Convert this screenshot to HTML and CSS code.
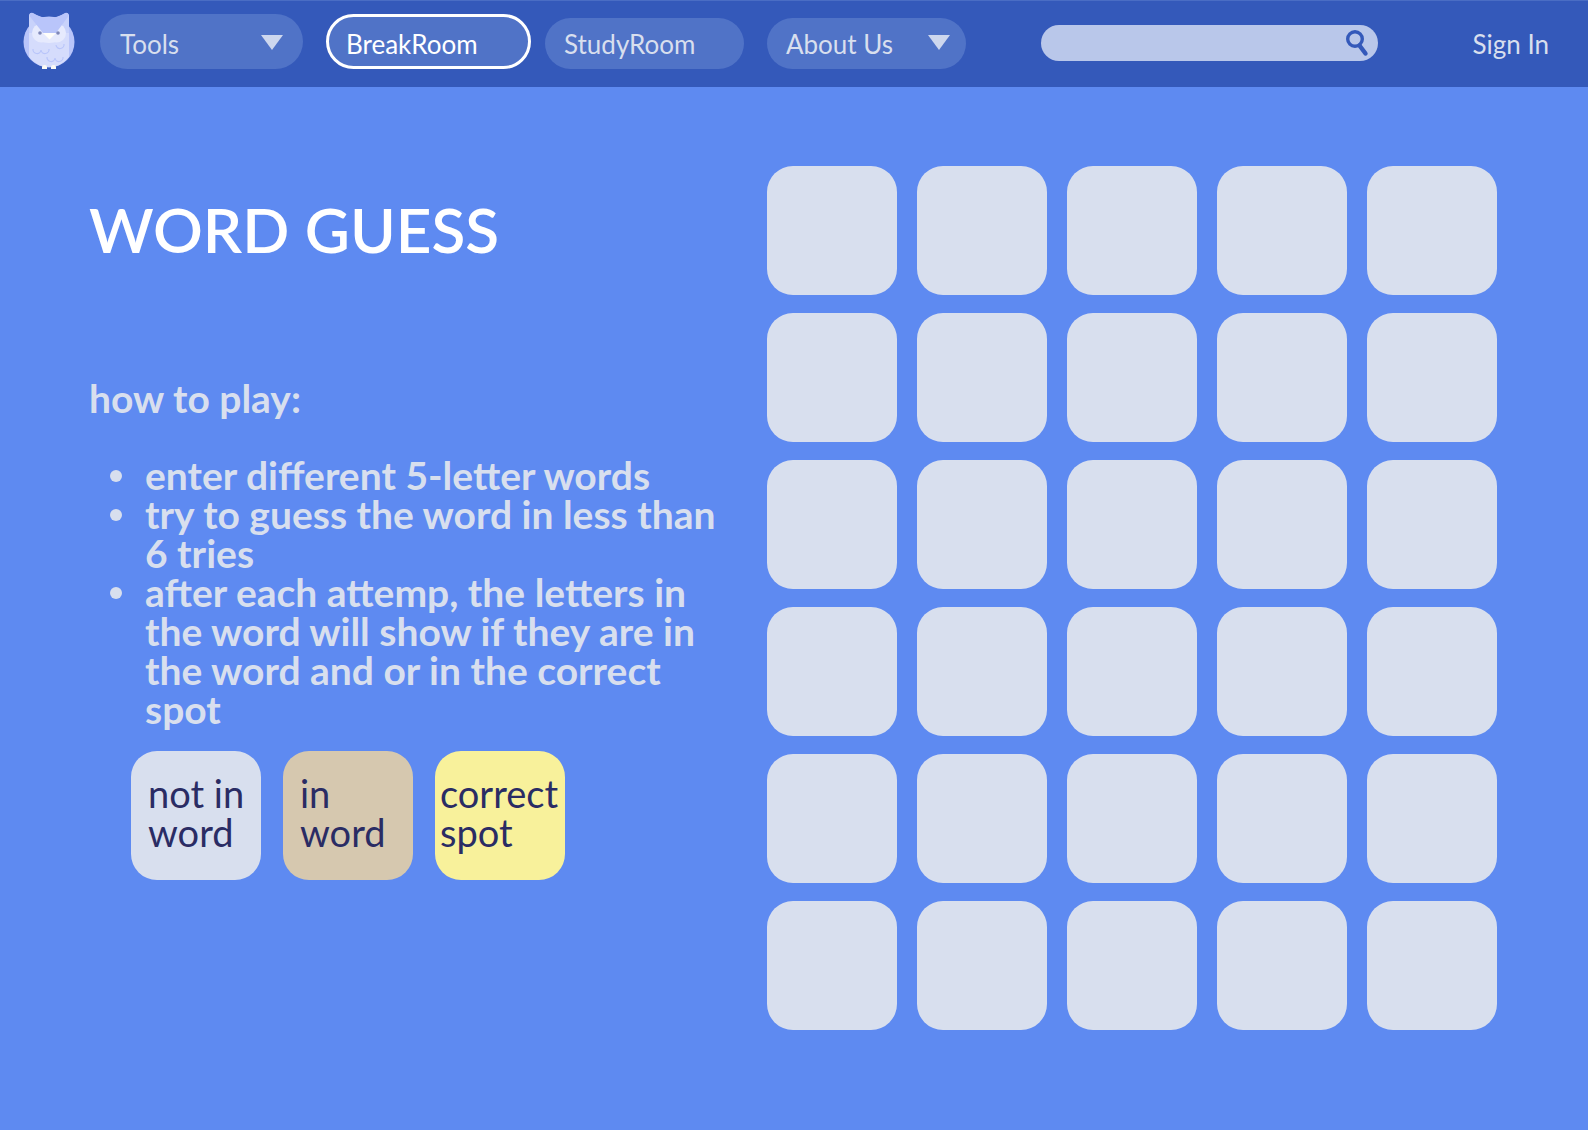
FILE: index.html
```html
<!DOCTYPE html>
<html lang="en">
<head>
  <meta charset="utf-8">
  <meta name="viewport" content="width=device-width, initial-scale=1">
  <title>Word Guess</title>
  <link rel="stylesheet" href="styles.css">
</head>
<body>
  <header class="topbar">
    <a class="logo" href="#" aria-label="Home">
      <svg width="52" height="58" viewBox="23 12 52 58" aria-hidden="true">
        <ellipse cx="49" cy="42" rx="25.5" ry="25.5" fill="#b9c5fa"/>
        <path d="M29 24h40v33q-8 10-20 10t-20-10z" fill="#d5dcfc"/>
        <path d="M29 15q1-3 4-1.500 8 4.500 16 4.500t16-4.500q3-1.500 4 1.500v18H29z" fill="#c8d2fb"/>
        <ellipse cx="41.500" cy="33" rx="9.500" ry="9.500" fill="#e6eafd"/>
        <ellipse cx="56.500" cy="33" rx="9.500" ry="9.500" fill="#e6eafd"/>
        <path d="M36 36h26q-3 7-13 7t-13-7z" fill="#e6eafd"/>
        <path d="M29.500 16q0-4 3.500-3 8 5 16 5t16-5q3.500-1 3.500 3L56 33H43z" fill="#b9c5fa"/>
        <path d="M43 33h13l-6.500 6.500z" fill="#fffefa"/>
        <circle cx="40" cy="33" r="1.800" fill="#7f88b8"/>
        <circle cx="58" cy="33" r="1.800" fill="#7f88b8"/>
        <path d="M33 49a4 4 0 0 0 8 1a4 4 0 0 0 8-1M56 45a4 4 0 0 0 8-1M47 57a4 4 0 0 0 8 1a4 4 0 0 0 8-1" fill="none" stroke="#b9c5fa" stroke-width="1.200"/>
        <path d="M42 69v-2q0-2 2.500-2t2.500 2v2zM51 69v-2q0-2 2.500-2t2.500 2v2z" fill="#fbfaf4"/>
      </svg>
    </a>
    <nav class="nav" aria-label="Main">
      <button class="pill pill-tall" type="button">Tools
        <svg class="caret" width="22" height="15" viewBox="0 0 22 15" aria-hidden="true"><path d="M0 0h22L11 15z"/></svg>
      </button>
      <a class="pill pill-tall pill-active" href="#" aria-current="page">BreakRoom</a>
      <a class="pill" href="#">StudyRoom</a>
      <button class="pill" type="button">About Us
        <svg class="caret" width="22" height="15" viewBox="0 0 22 15" aria-hidden="true"><path d="M0 0h22L11 15z"/></svg>
      </button>
    </nav>
    <form class="search" role="search">
      <input class="search-input" type="search" aria-label="Search">
      <button class="search-button" type="submit" aria-label="Search">
        <svg width="24" height="28" viewBox="0 0 24 28" aria-hidden="true">
          <circle cx="10" cy="10" r="7.300" fill="none" stroke="#3459ba" stroke-width="3.400"/>
          <path d="M14.500 16.500l6 8" stroke="#3459ba" stroke-width="4.400" stroke-linecap="round"/>
        </svg>
      </button>
    </form>
    <a class="signin" href="#">Sign In</a>
  </header>

  <main class="game">
    <section class="intro">
      <h1 class="title">WORD GUESS</h1>
      <h2 class="subtitle">how to play:</h2>
      <ul class="rules">
        <li class="rule"><span>enter different 5-letter words</span></li>
        <li class="rule"><span>try to guess the word in less than 6 tries</span></li>
        <li class="rule"><span>after each attemp, the letters in the word will show if they are in the word and or in the correct spot</span></li>
      </ul>
      <div class="legend">
        <div class="key key-absent">not in word</div>
        <div class="key key-present">in<br>word</div>
        <div class="key key-correct">correct spot</div>
      </div>
    </section>
    <section class="board" aria-label="Guesses">
      <div class="tile"></div><div class="tile"></div><div class="tile"></div><div class="tile"></div><div class="tile"></div>
      <div class="tile"></div><div class="tile"></div><div class="tile"></div><div class="tile"></div><div class="tile"></div>
      <div class="tile"></div><div class="tile"></div><div class="tile"></div><div class="tile"></div><div class="tile"></div>
      <div class="tile"></div><div class="tile"></div><div class="tile"></div><div class="tile"></div><div class="tile"></div>
      <div class="tile"></div><div class="tile"></div><div class="tile"></div><div class="tile"></div><div class="tile"></div>
      <div class="tile"></div><div class="tile"></div><div class="tile"></div><div class="tile"></div><div class="tile"></div>
    </section>
  </main>
</body>
</html>
```

FILE: styles.css
```css
* {
  box-sizing: border-box;
}

body {
  margin: 0;
  min-height: 100vh;
  background: #5e8af1;
  color: #d8dfee;
  font-family: Lato, "Open Sans", sans-serif;
}

.topbar {
  display: flex;
  align-items: flex-start;
  padding: 11px 39px 17px 23px;
  border-top: 1px solid #4a6dc4;
  background: #3459ba;
}

.logo,
.logo svg {
  display: block;
}

.nav {
  display: flex;
  align-items: flex-end;
  margin: 2px 0 0 25px;
}

.pill {
  display: flex;
  align-items: center;
  justify-content: space-between;
  width: 199px;
  height: 51px;
  margin-right: 23px;
  padding: 0 16px 0 19px;
  border: 0;
  border-radius: 26px;
  background: #5073c7;
  color: #d8dfee;
  font: 400 26px/32px Lato, "Open Sans", sans-serif;
  text-decoration: none;
}

.pill-tall {
  width: 203px;
  height: 55px;
  padding: 4px 20px 0 20px;
  border-radius: 28px;
}

.pill-active {
  width: 205px;
  margin-right: 14px;
  padding-left: 17px;
  border: 3px solid #fff;
  color: #fff;
}

.caret {
  margin-bottom: 2px;
  fill: #cdd7ee;
}

.search {
  display: flex;
  flex: 1;
  align-items: center;
  height: 36px;
  margin: 13px 94px 0 52px;
  padding: 0 9px 0 18px;
  border-radius: 18px;
  background: #b9c7ea;
}

.search-input {
  flex: 1;
  min-width: 0;
  border: 0;
  outline: 0;
  background: transparent;
  color: #3459ba;
  font: 400 20px/28px Lato, "Open Sans", sans-serif;
}

.search-button {
  padding: 0;
  border: 0;
  background: transparent;
}

.search-button svg {
  display: block;
}

.signin {
  margin-top: 16px;
  color: #d8dfee;
  font-size: 26px;
  line-height: 32px;
  text-decoration: none;
}

.game {
  display: grid;
  grid-template-columns: minmax(0, 1fr) auto;
  column-gap: 44px;
  padding: 79px 91px 100px 89px;
}

.title {
  margin: 24px 0 0;
  color: #fff;
  font-size: 62px;
  font-weight: 600;
  line-height: 78px;
}

.subtitle {
  margin: 111px 0 0;
  font-size: 39px;
  font-weight: 700;
  line-height: 39px;
}

.rules {
  margin: 38px 0 0;
  padding: 0 0 0 21px;
  font-size: 39px;
  font-weight: 700;
  line-height: 39px;
  list-style: none;
}

.rule {
  display: flex;
  gap: 23px;
}

.rule::before {
  flex: none;
  width: 12px;
  height: 12px;
  margin-top: 14px;
  border-radius: 50%;
  background: #d8dfee;
  content: "";
}

.legend {
  display: flex;
  gap: 22px;
  margin: 22px 0 0 42px;
}

.key {
  width: 130px;
  height: 129px;
  padding: 23px 4px 0 17px;
  border-radius: 26px;
  color: #2a2c64;
  font-size: 38px;
  line-height: 39px;
}

.key-absent {
  background: #d8dfee;
}

.key-present {
  background: #d6c8af;
}

.key-correct {
  padding-left: 5px;
  background: #f8f19b;
}

.board {
  display: grid;
  grid-template-columns: repeat(5, 130px);
  grid-auto-rows: 129px;
  gap: 18px 20px;
}

.tile {
  border-radius: 26px;
  background: #d8dfee;
}
```
